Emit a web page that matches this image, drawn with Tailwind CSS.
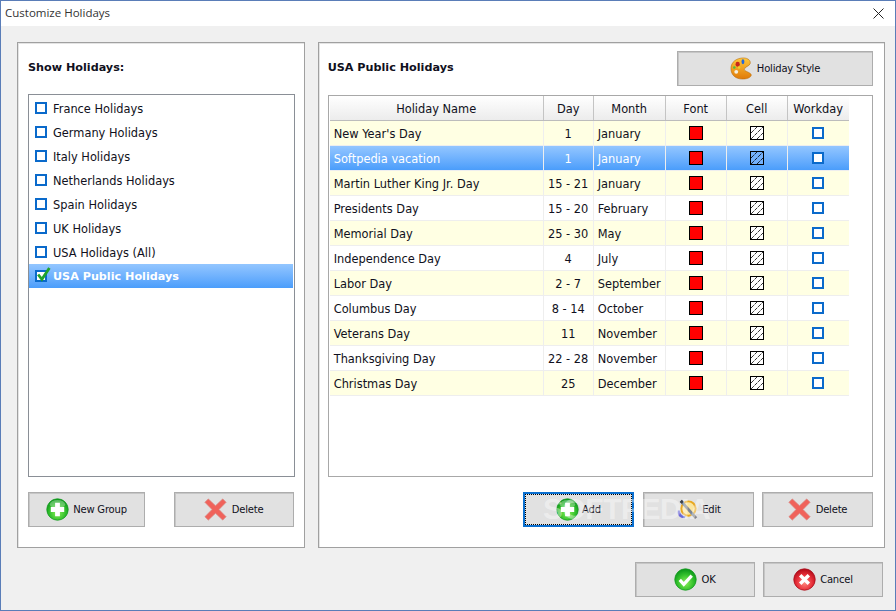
<!DOCTYPE html>
<html>
<head>
<meta charset="UTF-8">
  <title>Customize Holidays</title>
  <script src="https://cdn.jsdelivr.net/npm/@tailwindcss/browser@4"></script>
</head>
<body class="bg-[#f0f0f0] overflow-hidden font-['DejaVu_Sans',sans-serif] text-[11.4px] text-[#101020]">
  <!-- shared icons -->
  <svg class="absolute w-0 h-0">
    <defs>
      <radialGradient id="green" cx="50%" cy="65%" r="60%"><stop offset="0" stop-color="#8cf05a"/><stop offset="0.6" stop-color="#35c22d"/><stop offset="1" stop-color="#0f9a1c"/></radialGradient>
      <radialGradient id="red" cx="50%" cy="65%" r="60%"><stop offset="0" stop-color="#ff8a80"/><stop offset="0.6" stop-color="#e8303a"/><stop offset="1" stop-color="#b80e1c"/></radialGradient>
      <linearGradient id="orange" x1="0" y1="0" x2="0" y2="1"><stop offset="0" stop-color="#ffc93c"/><stop offset="1" stop-color="#e07a08"/></linearGradient>
      <symbol id="plus" viewBox="0 0 24 24">
        <circle cx="12" cy="12" r="11.2" fill="url(#green)" stroke="#159a22" stroke-width="0.8"/>
        <ellipse cx="12" cy="6.5" rx="8" ry="4.5" fill="#fff" opacity="0.3"/>
        <path d="M9.5 5h5v4.5H19v5h-4.5V19h-5v-4.5H5v-5h4.5z" fill="#fff"/>
      </symbol>
      <symbol id="cross" viewBox="0 0 24 24">
        <path d="M4.5 1L12 8.2 19.5 1 23 4.5 15.6 12 23 19.5 19.5 23 12 15.8 4.5 23 1 19.5 8.4 12 1 4.5z" fill="#f0625a" stroke="#d9807a" stroke-width="0.8"/>
      </symbol>
      <symbol id="ok" viewBox="0 0 24 24">
        <circle cx="12" cy="12" r="11.2" fill="url(#green)" stroke="#159a22" stroke-width="0.8"/>
        <path d="M6 12.5l4.2 4.5L18.5 8" fill="none" stroke="#fff" stroke-width="3.4"/>
      </symbol>
      <symbol id="cancel" viewBox="0 0 24 24">
        <circle cx="12" cy="12" r="11.2" fill="url(#red)" stroke="#a80d1a" stroke-width="0.8"/>
        <path d="M7.5 7.5l9 9M16.5 7.5l-9 9" stroke="#fff" stroke-width="3.6"/>
      </symbol>
      <symbol id="pencil" viewBox="0 0 24 24">
        <circle cx="13" cy="11" r="7.5" fill="#fbe6a0" stroke="#e8a820" stroke-width="2"/>
        <path d="M2 13c-1 5 2 8 7 8l1-2c-3 0-6-2-6-6z" fill="#6a6ad8"/>
        <path d="M5 3l16 18" stroke="#7d8590" stroke-width="3"/>
        <path d="M5 3l2 2" stroke="#3a3f46" stroke-width="3"/>
      </symbol>
      <symbol id="palette" viewBox="0 0 24 24">
        <path d="M14 1c5 0 8 3 7 6-1 3-6 3-6 6 0 2 4 2 7 5 1 2-2 5-9 5C6 23 1 19 1 12S7 1 14 1z" fill="url(#orange)" stroke="#b86a08" stroke-width="0.6"/>
        <circle cx="6.5" cy="15.5" r="2" fill="#f4f0e4"/>
        <ellipse cx="8" cy="7.5" rx="2.2" ry="2.6" fill="#c8281c"/>
        <ellipse cx="13.5" cy="5" rx="1.5" ry="2.6" fill="#2468d8"/>
        <circle cx="4.5" cy="11" r="1.3" fill="#48c040"/>
        <circle cx="9.5" cy="11" r="1.3" fill="#e8d030"/>
      </symbol>
    </defs>
  </svg>

  <div class="w-[896px] h-[611px] border border-[#5a7db8] flex flex-col relative">
    <!-- title bar -->
    <div class="h-[25px] bg-white flex items-center justify-between pl-[4px] pr-[11px] shrink-0">
      <span class="font-['Open_Sans',sans-serif] text-[11.5px] text-[#333] mb-[2px]">Customize Holidays</span>
      <svg class="w-[11px] h-[11px]" viewBox="0 0 11 11"><path d="M0.5 0.5l10 10M10.5 0.5l-10 10" stroke="#222" stroke-width="1"/></svg>
    </div>

    <!-- panels -->
    <div class="flex pl-[16px] pr-[10px] pt-[16px] gap-[13px]">
      <div class="w-[288px] h-[506px] bg-white border border-[#a0a0a0] shadow-[inset_1px_1px_0_#e4e4e4] pl-[10px] pr-[9px] flex flex-col">
        <div class="h-[51px] pt-[16px] font-bold text-[11.2px] leading-[18px]">Show Holidays:</div>
        <ul id="group-list" class="h-[383px] border border-[#8a8f96] pr-[1px] pt-[1px]"></ul>
        <div class="flex justify-between mt-[15px] pr-[1px]">
          <button class="w-[117px] h-[35px] bg-[#e1e1e1] border border-[#adadad] shadow-[inset_1px_1px_0_#c6c6c6] text-[10px] tracking-[-0.2px] flex items-center justify-center gap-[4px]">
            <svg class="w-[23px] h-[23px]"><use href="#plus"/></svg>New Group
          </button>
          <button class="w-[120px] h-[35px] bg-[#e1e1e1] border border-[#adadad] shadow-[inset_1px_1px_0_#c6c6c6] text-[10px] tracking-[-0.2px] flex items-center justify-center gap-[5px]">
            <svg class="w-[23px] h-[23px]"><use href="#cross"/></svg>Delete
          </button>
        </div>
      </div>

      <div class="w-[568px] h-[506px] bg-white border border-[#a0a0a0] shadow-[inset_1px_1px_0_#e4e4e4] pl-[9px] pr-[11px] flex flex-col">
        <div class="flex justify-between items-start pt-[8px] h-[52px]">
          <span class="font-bold text-[11.2px] leading-[18px] mt-[8px]">USA Public Holidays</span>
          <button class="w-[196px] h-[35px] bg-[#e1e1e1] border border-[#adadad] shadow-[inset_1px_1px_0_#c6c6c6] text-[10px] tracking-[-0.2px] flex items-center justify-center gap-[4px]">
            <svg class="w-[23px] h-[23px]"><use href="#palette"/></svg>Holiday Style
          </button>
        </div>
        <div class="h-[382px] border border-[#a8a8a8] px-[1px]">
          <div class="flex h-[25px] w-[519px] border-b border-[#bcbcbc] bg-gradient-to-b from-white to-[#ececec]">
            <div class="w-[214px] border-r border-[#c4c4c4] text-center leading-[26px]">Holiday Name</div>
            <div class="w-[50px] border-r border-[#c4c4c4] text-center leading-[26px]">Day</div>
            <div class="w-[72px] border-r border-[#c4c4c4] text-center leading-[26px]">Month</div>
            <div class="w-[61px] border-r border-[#c4c4c4] text-center leading-[26px]">Font</div>
            <div class="w-[61px] border-r border-[#c4c4c4] text-center leading-[26px]">Cell</div>
            <div class="w-[61px] text-center leading-[26px]">Workday</div>
          </div>
          <div id="holiday-table"></div>
        </div>
        <div class="flex justify-end mt-[15px] gap-[8px]">
          <button class="w-[111px] h-[35px] mr-[1px] bg-[#e1e1e1] border-2 border-[#0a6fd0] outline-1 outline-dotted outline-black -outline-offset-3 text-[10px] tracking-[-0.2px] flex items-center justify-center gap-[3px]">
            <svg class="w-[23px] h-[23px]"><use href="#plus"/></svg>Add
          </button>
          <button class="w-[111px] h-[35px] bg-[#e1e1e1] border border-[#adadad] shadow-[inset_1px_1px_0_#c6c6c6] text-[10px] tracking-[-0.2px] flex items-center justify-center gap-[3px]">
            <svg class="w-[23px] h-[23px]"><use href="#pencil"/></svg>Edit
          </button>
          <button class="w-[111px] h-[35px] bg-[#e1e1e1] border border-[#adadad] shadow-[inset_1px_1px_0_#c6c6c6] text-[10px] tracking-[-0.2px] flex items-center justify-center gap-[5px]">
            <svg class="w-[23px] h-[23px]"><use href="#cross"/></svg>Delete
          </button>
        </div>
      </div>
    </div>

    <!-- footer buttons -->
    <div class="flex justify-end gap-[8px] pr-[12px] pt-[14px]">
      <button class="w-[120px] h-[35px] bg-[#e1e1e1] border border-[#adadad] shadow-[inset_1px_1px_0_#c6c6c6] text-[10px] tracking-[-0.2px] flex items-center justify-center gap-[4px]">
        <svg class="w-[23px] h-[23px]"><use href="#ok"/></svg>OK
      </button>
      <button class="w-[120px] h-[35px] bg-[#e1e1e1] border border-[#adadad] shadow-[inset_1px_1px_0_#c6c6c6] text-[10px] tracking-[-0.2px] flex items-center justify-center gap-[4px]">
        <svg class="w-[23px] h-[23px]"><use href="#cancel"/></svg>Cancel
      </button>
    </div>

    <!-- watermark -->
    <div class="absolute left-[542px] top-[491px] text-[30px] leading-[34px] font-bold font-['Liberation_Sans',sans-serif] text-white/40 tracking-[-0.5px] pointer-events-none">SOFTPEDIA</div>
  </div>

  <script>
    const groups = ['France Holidays', 'Germany Holidays', 'Italy Holidays', 'Netherlands Holidays', 'Spain Holidays', 'UK Holidays', 'USA Holidays (All)', 'USA Public Holidays'];
    const holidays = [
      ["New Year's Day", '1', 'January'],
      ['Softpedia vacation', '1', 'January'],
      ['Martin Luther King Jr. Day', '15 - 21', 'January'],
      ['Presidents Day', '15 - 20', 'February'],
      ['Memorial Day', '25 - 30', 'May'],
      ['Independence Day', '4', 'July'],
      ['Labor Day', '2 - 7', 'September'],
      ['Columbus Day', '8 - 14', 'October'],
      ['Veterans Day', '11', 'November'],
      ['Thanksgiving Day', '22 - 28', 'November'],
      ['Christmas Day', '25', 'December']
    ];
    const selectedBg = 'bg-gradient-to-b from-[#93c6ff] to-[#4a9dfb] text-white';

    document.getElementById('group-list').innerHTML = groups.map((name, i) => {
      const on = i === groups.length - 1;
      return `
        <li class="h-[24px] flex items-center pl-[6px] ${on ? selectedBg + ' font-bold text-[11.2px]' : ''}">
          <span class="relative w-[12px] h-[12px] border-2 border-[#0a6acb] bg-white shrink-0 mr-[6px]">
            ${on ? '<svg class="absolute left-[-1px] top-[-5px] w-[15px] h-[15px]" viewBox="0 0 14 14"><path d="M2 7l3.5 4.5L12.5 1" fill="none" stroke="#1fa32a" stroke-width="2.6"/></svg>' : ''}
          </span>
          <span class="${on ? 'mt-[2px]' : 'mt-[3px]'}">${name}</span>
        </li>`;
    }).join('');

    document.getElementById('holiday-table').innerHTML = holidays.map((h, i) => {
      const sel = i === 1;
      const rowBg = sel ? selectedBg : (i % 2 === 0 ? 'bg-[#ffffe3]' : 'bg-white');
      const hatchBg = sel ? 'bg-[#73b0fb]' : 'bg-white';
      return `
        <div class="flex h-[25px] w-[519px] leading-[26px] border-b border-[#eeeeee] ${rowBg}">
          <div class="w-[214px] border-r border-[#eeeeee] pl-[4px]">${h[0]}</div>
          <div class="w-[50px] border-r border-[#eeeeee] text-center whitespace-nowrap">${h[1]}</div>
          <div class="w-[72px] border-r border-[#eeeeee] pl-[4px] whitespace-nowrap">${h[2]}</div>
          <div class="w-[61px] border-r border-[#eeeeee] flex items-center justify-center">
            <span class="w-[14px] h-[14px] bg-[#ff0000] border border-black"></span>
          </div>
          <div class="w-[61px] border-r border-[#eeeeee] flex items-center justify-center">
            <svg class="w-[14px] h-[14px] ${hatchBg} border border-black" viewBox="0 0 12 12"><path d="M0 6L6 0M0 12L12 0M6 12L12 6" stroke="#000" stroke-width="0.8" stroke-dasharray="4 1"/></svg>
          </div>
          <div class="w-[61px] pr-[1px] flex items-center justify-center">
            <span class="w-[12px] h-[12px] border-2 border-[#0a6acb] bg-white"></span>
          </div>
        </div>`;
    }).join('');
  </script>
</body>
</html>
